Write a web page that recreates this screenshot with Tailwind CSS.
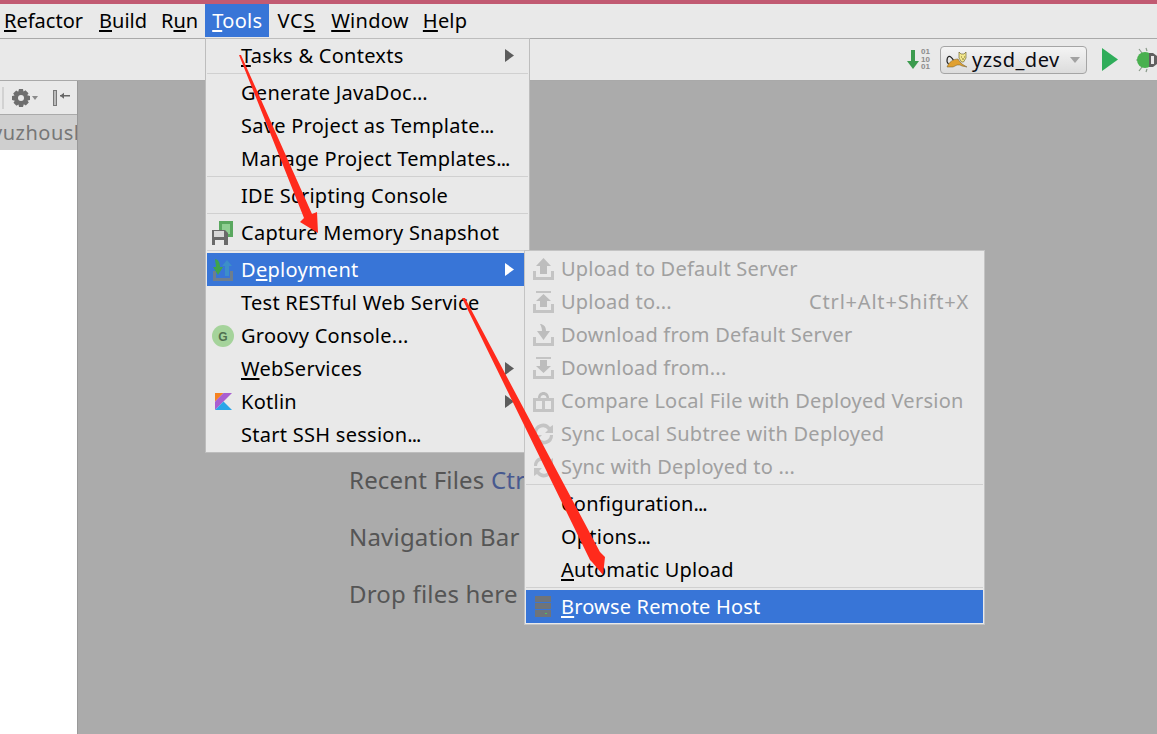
<!DOCTYPE html>
<html lang="en">
  <head>
    <meta charset="UTF-8" />
    <title>Deployment menu</title>
    <script src="https://cdn.jsdelivr.net/npm/@tailwindcss/browser@4"></script>
  </head>
  <body class="relative w-[1157px] h-[734px] overflow-hidden bg-[#ababab] font-['Noto_Sans',sans-serif] text-[20px] text-black">
    <div class="h-[4px] bg-[#c15a72]"></div>

    <!-- menu bar -->
    <nav class="flex h-[35px] bg-[#e9e9e9] border-b border-[#a9a9a9] pl-[4px] items-start">
      <span class="h-[33px] leading-[33px] mr-[16px]"><u class="underline-offset-2">R</u>efactor</span>
      <span class="h-[33px] leading-[33px] mr-[14px]"><u class="underline-offset-2">B</u>uild</span>
      <span class="h-[33px] leading-[33px] mr-[7px]">R<u class="underline-offset-2">u</u>n</span>
      <span class="h-[33px] leading-[33px] pl-[7px] pr-[7px] tracking-[0.3px] bg-[#3875d7] text-white"><u class="underline-offset-2">T</u>ools</span>
      <span class="h-[33px] leading-[33px] ml-[8px] mr-[16px] tracking-[0.8px]">VC<u class="underline-offset-2">S</u></span>
      <span class="h-[33px] leading-[33px] mr-[14px] tracking-[0.3px]"><u class="underline-offset-2">W</u>indow</span>
      <span class="h-[33px] leading-[33px] tracking-[0.2px]"><u class="underline-offset-2">H</u>elp</span>
    </nav>

    <!-- toolbar -->
    <div class="flex h-[42px] bg-[#e9e9e9] border-b border-[#a9a9a9] items-center justify-end overflow-hidden">
      <svg class="w-[12px] h-[22px] mr-[2px]" viewBox="0 0 12 22"><path d="M4 1h4v11h4l-6 8-6-8h4z" fill="#3c9b4e" /></svg>
      <div class="w-[10px] mr-[9px] font-['Liberation_Sans',sans-serif] font-bold text-[8px] leading-[7.500px] text-[#8c8c8c]">01<br />10<br />01</div>
      <div class="flex items-center w-[147px] h-[28px] rounded-[4px] border border-[#a5a5a5] bg-gradient-to-b from-[#f4f4f4] to-[#dcdcdc] pl-[5px] mr-[15px]">
        <svg class="w-[22px] h-[16px] mr-[4px] shrink-0" viewBox="0 0 22 16">
          <path d="M8 9C3 1 1 5 1 9c0 1 1 3 2 3" stroke="#222" stroke-width="1.200" fill="none" />
          <path d="M1 15c2-5 6-8 11-8l2 3 2 2 5 3-5-1-2-1-3 0-4 2-3 0z" fill="#e0a030" stroke="#6b5a2a" stroke-width=".5" />
          <path d="M13 0l2 2h3l2-2v6l-2.500 4h-2L13 6z" fill="#f3e88f" stroke="#5f5520" stroke-width=".6" />
          <path d="M15 5h1M18 5h1M16 7h2" stroke="#5f5520" stroke-width=".8" />
        </svg>
        <span class="text-[#0b0b12] tracking-[0.5px] leading-[24px]">yzsd_dev</span>
        <svg class="w-[10px] h-[6px] ml-auto mr-[6px]" viewBox="0 0 10 6"><path d="M0 0h10L5 6z" fill="#a2a2a2" /></svg>
      </div>
      <svg class="w-[16px] h-[23px] mr-[18px] shrink-0" viewBox="0 0 16 23"><path d="M0 0l16 11.500L0 23z" fill="#2fad5a" /></svg>
      <svg class="w-[21px] h-[26px] shrink-0" viewBox="0 0 21 26">
        <path d="M3 2l3 4M3 24l3-4M0 13h2M10 1l1 3M10 25l1-3" stroke="#8a9a8a" stroke-width="1.200" fill="none" />
        <circle cx="9" cy="13" r="8" fill="#49b04f" />
        <path d="M13 6h4l4 3v8l-4 3h-4z" fill="#5f5f5f" />
        <path d="M15 9h3v8h-3z" fill="#e9e9e9" />
      </svg>
    </div>

    <div class="flex h-[653px]">
      <!-- project panel -->
      <aside class="flex flex-col w-[78px] border-r border-[#999] bg-white shrink-0">
        <div class="flex items-center h-[34px] bg-[#e9e9e9] border-b border-[#aaa] pl-[2px] shrink-0">
          <div class="w-[2px] h-[22px] bg-[#d2d2d2] mr-[8px]"></div>
          <svg class="w-[18px] h-[18px]" viewBox="0 0 18 18">
            <path d="M7 0h4l.5 2.500 2-1.300 3 3-1.300 2L18 7v4l-2.500.5 1.300 2-3 3-2-1.300L11 18H7l-.5-2.500-2 1.300-3-3 1.300-2L0 11V7l2.500-.5-1.300-2 3-3 2 1.300z" fill="#6e6e6e" />
            <circle cx="9" cy="9" r="3" fill="#e9e9e9" />
          </svg>
          <svg class="w-[6px] h-[4px] ml-[2px]" viewBox="0 0 6 4"><path d="M0 0h6L3 4z" fill="#8a8a8a" /></svg>
          <svg class="w-[18px] h-[16px] ml-[15px]" viewBox="0 0 18 16">
            <path d="M0 0h4v16H0z" fill="#777" /><path d="M1 1h2v14H1z" fill="#bbb" />
            <path d="M7 5h10v1.500H7zM7 5.700l4-3v6z" fill="#666" />
          </svg>
        </div>
        <div class="h-[35px] bg-[#cfcfcf] overflow-hidden shrink-0 leading-[35px] text-[#777] whitespace-nowrap tracking-[0.5px]"><span class="block ml-[-8px]">yuzhoush</span></div>
      </aside>

      <!-- editor placeholder -->
      <main class="flex-1 pl-[271px] pt-[370px] text-[24px] leading-[57px] text-[#555] whitespace-nowrap tracking-[0.2px]">
        <p>Recent Files <span class="text-[#47598f]">Ctrl+E</span></p>
        <p>Navigation Bar</p>
        <p>Drop files here</p>
      </main>
    </div>

    <!-- Tools menu -->
    <div class="absolute left-[205px] top-[38px] w-[325px] bg-[#e9e9e9] border border-[#bdbdbd] px-[1px] pb-[1px] tracking-[0.27px]">
      <div class="flex items-center h-[33px] pl-[34px] pr-[14px] justify-between"><span><u class="underline-offset-2">T</u>asks &amp; Contexts</span><svg class="w-[9px] h-[13px]" viewBox="0 0 9 13"><path d="M0 0l9 6.500L0 13z" fill="#5c5c5c" /></svg></div>
      <div class="mt-[1px] h-[3px] border-t border-[#d0d0d0]"></div>
      <div class="h-[33px] leading-[33px] pl-[34px]">Generate JavaDoc<span class="tracking-[-0.2px]">...</span></div>
      <div class="h-[33px] leading-[33px] pl-[34px]">Save Project as Template<span class="tracking-[-0.7px]">...</span></div>
      <div class="h-[33px] leading-[33px] pl-[34px]">Manage Project Templates<span class="tracking-[-0.9px]">...</span></div>
      <div class="mt-[1px] h-[3px] border-t border-[#d0d0d0]"></div>
      <div class="flex items-center h-[33px] pl-[34px]">IDE Scripting Console</div>
      <div class="mt-[1px] h-[3px] border-t border-[#d0d0d0]"></div>
      <div class="flex items-center h-[33px] pl-[5px]">
        <svg class="w-[21px] h-[24px] mr-[8px]" viewBox="0 0 21 24">
          <path d="M7 0h14v16H7z" fill="#5aa85f" /><path d="M10 3h8v10h-8z" fill="#8fcf92" />
          <path d="M0 9h13l3 3v12H0z" fill="#6a6a6a" /><path d="M2 10h10v6H2z" fill="#d8d8d8" /><path d="M3 19h9v5H3z" fill="#e9e9e9" />
        </svg>
        Capture Memory Snapshot
      </div>
      <div class="mt-[1px] h-[3px] border-t border-[#d0d0d0]"></div>
      <div class="flex items-center h-[33px] pl-[6px] pr-[14px] bg-[#3875d7] text-white">
        <svg class="w-[20px] h-[22px] mr-[8px]" viewBox="0 0 20 22">
          <path d="M0 12h3v7h14v-7h3v10H0z" fill="#6e7e8e" />
          <path d="M12 17V7H9l5-6 5 6h-3v10z" fill="#3c8fc9" />
          <path d="M2 0c4 1 5 4 5 8h3l-5 8-5-8h3c0-3-1-5-1-8z" fill="#3fa34d" />
        </svg>
        <span>D<u class="underline-offset-2">e</u>ployment</span>
        <svg class="w-[9px] h-[13px] ml-auto" viewBox="0 0 9 13"><path d="M0 0l9 6.500L0 13z" fill="#fff" /></svg>
      </div>
      <div class="flex items-center h-[33px] pl-[34px]">Test RESTful Web Service</div>
      <div class="flex items-center h-[33px] pl-[5px]">
        <svg class="w-[22px] h-[22px] mr-[7px]" viewBox="0 0 22 22">
          <circle cx="11" cy="11" r="11" fill="#a5d39b" />
          <text x="11" y="15.500" text-anchor="middle" font-family="Liberation Sans" font-weight="700" font-size="12" fill="#4f6f4f">G</text>
        </svg>
        Groovy Console...
      </div>
      <div class="flex items-center h-[33px] pl-[34px] pr-[14px] justify-between"><span><u class="underline-offset-2">W</u>ebServices</span><svg class="w-[9px] h-[13px]" viewBox="0 0 9 13"><path d="M0 0l9 6.500L0 13z" fill="#5c5c5c" /></svg></div>
      <div class="flex items-center h-[33px] pl-[8px] pr-[14px]">
        <svg class="w-[17px] h-[17px] mr-[9px]" viewBox="0 0 17 17">
          <path d="M0 0h8.500L0 8.500z" fill="#f58220" /><path d="M8.500 0H17L8.500 8.500 0 17V8.500z" fill="#a95fd0" /><path d="M8.500 8.500L17 17H0z" fill="#2aa6e8" />
        </svg>
        Kotlin
        <svg class="w-[9px] h-[13px] ml-auto" viewBox="0 0 9 13"><path d="M0 0l9 6.500L0 13z" fill="#5c5c5c" /></svg>
      </div>
      <div class="h-[33px] leading-[33px] pl-[34px]">Start SSH session<span class="tracking-[-1px]">...</span></div>
    </div>

    <!-- Deployment submenu -->
    <div class="absolute left-[524px] top-[250px] w-[461px] bg-[#e9e9e9] border border-[#c4c4c4] pt-[1px] px-[1px] pb-[1px] tracking-[0.22px]">
      <div class="flex items-center h-[33px] pl-[7px] text-[#a0a0a0]">
        <svg class="w-[21px] h-[22px] mr-[7px]" viewBox="0 0 21 22"><path d="M0 13h3v6h15v-6h3v9H0z" fill="#c4c4c4" /><path d="M7 16V8H3l7.500-8L18 8h-4v8z" fill="#bdbdbd" /></svg>
        Upload to Default Server
      </div>
      <div class="flex items-center h-[33px] pl-[7px] pr-[14px] text-[#a0a0a0]">
        <svg class="w-[21px] h-[22px] mr-[7px]" viewBox="0 0 21 22"><path d="M0 13h3v6h15v-6h3v9H0zM3 0h15v2H3z" fill="#c4c4c4" /><path d="M7 16v-6H3l7.500-7L18 10h-4v6z" fill="#bdbdbd" /></svg>
        Upload to...
        <span class="ml-auto tracking-[0.8px]">Ctrl+Alt+Shift+X</span>
      </div>
      <div class="flex items-center h-[33px] pl-[7px] text-[#a0a0a0]">
        <svg class="w-[21px] h-[22px] mr-[7px]" viewBox="0 0 21 22"><path d="M0 13h3v6h15v-6h3v9H0z" fill="#c4c4c4" /><path d="M7 0c3 0 6 2 6 7h4l-6.500 9L4 7h5c0-3-1-5-2-7z" fill="#bdbdbd" /></svg>
        Download from Default Server
      </div>
      <div class="flex items-center h-[33px] pl-[7px] text-[#a0a0a0]">
        <svg class="w-[21px] h-[22px] mr-[7px]" viewBox="0 0 21 22"><path d="M0 13h3v6h15v-6h3v9H0zM3 0h15v2H3z" fill="#c4c4c4" /><path d="M7 3h7v6h4l-7.500 7L3 9h4z" fill="#bdbdbd" /></svg>
        Download from...
      </div>
      <div class="flex items-center h-[33px] pl-[7px] text-[#a0a0a0]">
        <svg class="w-[21px] h-[22px] mr-[7px]" viewBox="0 0 21 22"><path d="M0 8h21v14H0zM3 11v8h6v-8zM12 11v8h6v-8z" fill="#c4c4c4" fill-rule="evenodd" /><path d="M5 8c0-8 11-8 11 0h-2.500c0-4-6-4-6 0z" fill="#bdbdbd" /></svg>
        <span class="tracking-[0.26px]">Compare Local File with Deployed Version</span>
      </div>
      <div class="flex items-center h-[33px] pl-[7px] text-[#a0a0a0]">
        <svg class="w-[21px] h-[22px] mr-[7px]" viewBox="0 0 21 22"><path d="M1 10a9 9 0 0 1 16-6l3-2v8h-8l3-3A6 6 0 0 0 4 10zM20 12a9 9 0 0 1-16 6l-3 2v-8h8l-3 3a6 6 0 0 0 11-3z" fill="#c4c4c4" /></svg>
        <span class="tracking-[0.26px]">Sync Local Subtree with Deployed</span>
      </div>
      <div class="flex items-center h-[33px] pl-[7px] text-[#a0a0a0]">
        <svg class="w-[21px] h-[22px] mr-[7px]" viewBox="0 0 21 22"><path d="M1 10a9 9 0 0 1 16-6l3-2v8h-8l3-3A6 6 0 0 0 4 10zM20 12a9 9 0 0 1-16 6l-3 2v-8h8l-3 3a6 6 0 0 0 11-3z" fill="#c4c4c4" /></svg>
        Sync with Deployed to ...
      </div>
      <div class="mt-[1px] h-[3px] border-t border-[#d0d0d0]"></div>
      <div class="h-[33px] leading-[33px] pl-[35px]">Configuration<span class="tracking-[-1px]">...</span></div>
      <div class="h-[33px] leading-[33px] pl-[35px]">Options<span class="tracking-[-1px]">...</span></div>
      <div class="flex items-center h-[33px] pl-[35px]"><span><u class="underline-offset-2">A</u>utomatic Upload</span></div>
      <div class="mt-[1px] h-[3px] border-t border-[#d0d0d0]"></div>
      <div class="flex items-center h-[33px] pl-[9px] bg-[#3875d7] text-white tracking-[0.17px]">
        <svg class="w-[16px] h-[21px] mr-[10px]" viewBox="0 0 16 21"><path d="M0 0h16v6H0zM0 7h16v6H0zM0 14h16v7H0z" fill="#6f747a" /><path d="M10 17h2v1h-2z" fill="#4fc35a" /></svg>
        <span><u class="underline-offset-2">B</u>rowse Remote Host</span>
      </div>
    </div>

    <!-- red annotation arrows -->
    <svg class="absolute inset-0 pointer-events-none" width="1157" height="734" viewBox="0 0 1157 734">
      <path d="M239 55L241 55 312 214 317 212 318 233 300 222 304 218z" fill="#ff2a1c" />
      <path d="M462 298L465 298 600 552 605 557 603 575 592 562 590 560z" fill="#ff2a1c" />
    </svg>
  </body>
</html>
